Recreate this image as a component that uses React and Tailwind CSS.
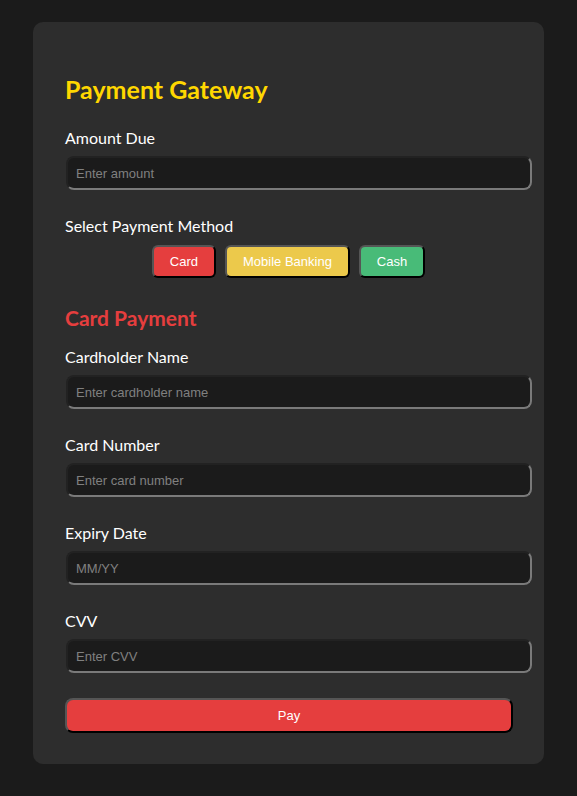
import React, { useState } from "react";

const labelCls =
  "block -ml-[1px] text-[16px] leading-[22px] text-white mb-[7px] font-['Lato',sans-serif]";
const inputCls =
  "block w-[466px] h-[34px] border-2 border-t-[#222222] border-l-[#222222] border-b-[#7a7a7a] border-r-[#7a7a7a] rounded-[8px] bg-[#1b1b1b] px-[8px] text-[13px] text-white placeholder:text-[#808080] outline-none font-['Liberation_Sans',Arial,sans-serif]";
const btnCls =
  "h-[33px] border-2 border-t-[#555555] border-l-[#555555] border-b-black border-r-black rounded-[6px] px-[16px] text-[13px] text-white font-['Liberation_Sans',Arial,sans-serif]";

const Field = ({ label, placeholder }) => (
  <div className="mb-[25px]">
    <label className={labelCls}>{label}</label>
    <input className={inputCls} placeholder={placeholder} />
  </div>
);

export default function App() {
  const [method, setMethod] = useState("card");

  return (
    <div className="min-h-screen bg-[#1b1b1b] pt-[22px] pb-[32px]">
      <div className="mx-[33px] bg-[#2d2d2d] rounded-[10px] pl-[33px] pr-[33px] pt-[51px] pb-[31px]">
        <h2 className="-ml-[1px] text-[25px] leading-[32px] font-bold text-[#ffd700] font-['Lato',sans-serif]">
          Payment Gateway
        </h2>

        <div className="mt-[22px]">
          <Field label="Amount Due" placeholder="Enter amount" />
        </div>

        <label className={labelCls + " !mb-[8px]"}>Select Payment Method</label>
        <div className="flex justify-center gap-[9px]">
          <button onClick={() => setMethod("card")} className={btnCls + " bg-[#e53e3e]"}>
            Card
          </button>
          <button onClick={() => setMethod("mobile")} className={btnCls + " bg-[#ecc94b]"}>
            Mobile Banking
          </button>
          <button onClick={() => setMethod("cash")} className={btnCls + " bg-[#48bb78]"}>
            Cash
          </button>
        </div>

        {method === "card" && (
          <>
            <h3 className="-ml-[1px] mt-[26px] mb-[14px] text-[21px] leading-[28px] font-bold text-[#e53e3e] font-['Lato',sans-serif]">
              Card Payment
            </h3>
            <Field label="Cardholder Name" placeholder="Enter cardholder name" />
            <Field label="Card Number" placeholder="Enter card number" />
            <Field label="Expiry Date" placeholder="MM/YY" />
            <Field label="CVV" placeholder="Enter CVV" />
          </>
        )}

        <button className="block -ml-[1px] w-[448px] h-[35px] border-2 border-t-[#555555] border-l-[#555555] border-b-black border-r-black rounded-[8px] bg-[#e53e3e] text-[13px] text-white font-['Liberation_Sans',Arial,sans-serif]">
          Pay
        </button>
      </div>
    </div>
  );
}
